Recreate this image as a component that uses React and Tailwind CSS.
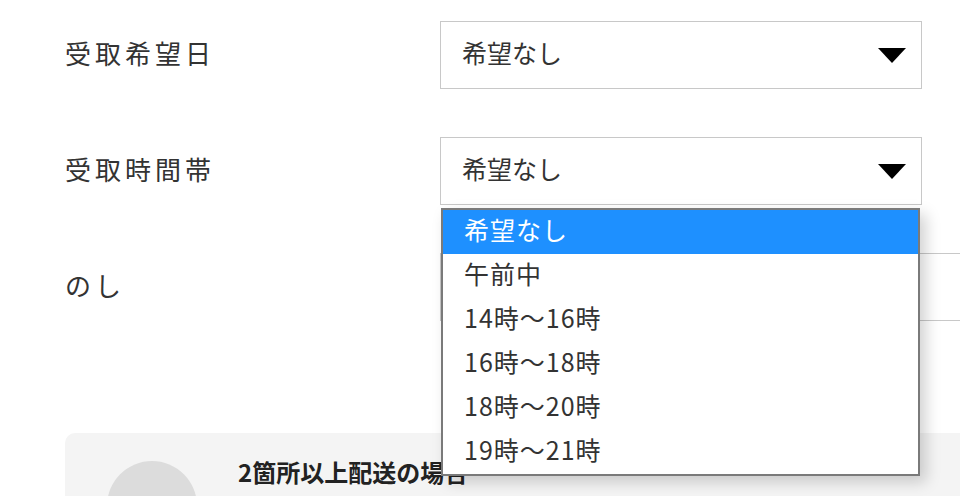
import React from 'react';

const font = { fontFamily: '"Noto Sans CJK JP", "Noto Sans", sans-serif' };

const options = ['希望なし', '午前中', '14時～16時', '16時～18時', '18時～20時', '19時～21時'];

const Arrow = () => (
    <svg width="28" height="15" viewBox="0 0 28 15" className="shrink-0">
        <polygon points="0,0 28,0 14,15" fill="#000" />
    </svg>
);

const Select = ({ value, children }) => (
    <div className="relative w-[482px] shrink-0">
        <div className="flex h-[68px] items-center justify-between border border-[#c8c8c8] bg-white pl-[21px] pr-[15px]">
            <span className="pb-[4px] text-[25px] text-[#333]">{value}</span>
            <Arrow />
        </div>
        {children}
    </div>
);

const Row = ({ label, children }) => (
    <div className="flex items-center">
        <div className="w-[375px] shrink-0 pb-[6px] text-[26px] tracking-[4px] text-[#333]">{label}</div>
        {children}
    </div>
);

const App = () => {
    return (
        <div className="relative h-[496px] w-[960px] overflow-hidden bg-white pl-[65px] pt-[21px]" style={font}>
            <div className="flex flex-col gap-[48px]">
                <Row label="受取希望日">
                    <Select value="希望なし" />
                </Row>
                <Row label="受取時間帯">
                    <Select value="希望なし">
                        <div className="absolute left-[1px] top-[71px] z-10 w-[479px] border-2 border-[#7a7a7a] bg-white shadow-[6px_6px_14px_rgba(0,0,0,0.18)]">
                            {options.map((o, i) => (
                                <div
                                    key={o}
                                    className={
                                        i === 0
                                            ? 'flex h-[44px] items-center bg-[#1e90ff] pb-[5px] pl-[21px] text-[25px] tracking-[1px] text-white'
                                            : 'flex h-[44px] items-center pb-[5px] pl-[21px] text-[25px] tracking-[1px] text-[#333]'
                                    }
                                >
                                    {o}
                                </div>
                            ))}
                        </div>
                    </Select>
                </Row>
                <Row label="のし">
                    <div className="h-[68px] w-[560px] shrink-0 border border-[#c8c8c8] bg-white" />
                </Row>
            </div>
            <div className="mt-[112px] flex h-[200px] rounded-l-[10px] bg-[#f4f4f4] pl-[42px] pt-[28px]">
                <div className="h-[90px] w-[90px] shrink-0 rounded-full bg-[#dcdcdc]" />
                <div className="ml-[41px] mt-[-7px] text-[24px] font-bold text-[#222]">2箇所以上配送の場合</div>
            </div>
        </div>
    );
};

export default App;
